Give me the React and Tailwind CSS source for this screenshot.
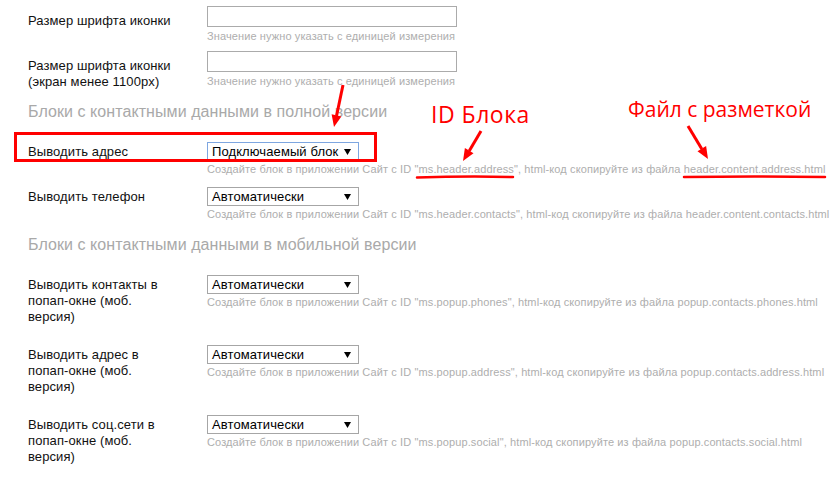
import React from "react";

const Tri = () => (
  <svg width="7" height="6" viewBox="0 0 7 6" className="shrink-0">
    <polygon points="0,0 7,0 3.5,6" fill="#000" />
  </svg>
);

function Select({ value, focused }) {
  return (
    <div
      className={
        "flex h-[19px] w-[152px] items-center justify-between bg-white pl-[4px] pr-[7px] text-[13px] leading-[16px] tracking-[0.1px] text-black border " +
        (focused ? "border-[#7ea6e0]" : "border-[#a6a6a6]")
      }
    >
      <span>{value}</span>
      <Tri />
    </div>
  );
}

function Hint({ children, mt = "mt-[2px]" }) {
  return (
    <div className={mt + " whitespace-nowrap text-[11px] leading-[13px] tracking-[0.11px] text-[#aeaeae]"}>
      {children}
    </div>
  );
}

function Label({ children, pt }) {
  return (
    <div className={"mr-[31px] w-[148px] shrink-0 text-[13px] leading-[16px] tracking-[0.1px] text-[#111] " + pt}>
      {children}
    </div>
  );
}

function InputRow({ label, mb }) {
  return (
    <div className={"flex " + mb}>
      <Label pt="pt-[7px]">{label}</Label>
      <div>
        <div className="h-[21px] w-[250px] border border-[#ababab] bg-white" />
        <Hint mt="mt-[3px]">Значение нужно указать с единицей измерения</Hint>
      </div>
    </div>
  );
}

function SelectRow({ label, value, id, file, focused, mb }) {
  return (
    <div className={"flex " + mb}>
      <Label pt="pt-[2px]">{label}</Label>
      <div>
        <Select value={value} focused={focused} />
        <Hint>
          Создайте блок в приложении Сайт с ID "{id}", html-код скопируйте из файла {file}
        </Hint>
      </div>
    </div>
  );
}

function Heading({ children, cls }) {
  return (
    <div className={"text-[16px] leading-[18px] tracking-[0.07px] text-[#a9a9a9] " + cls}>{children}</div>
  );
}

export default function App() {
  return (
    <div
      className="relative h-[487px] w-[839px] overflow-hidden bg-white"
      style={{ fontFamily: '"Liberation Sans", Arial, sans-serif' }}
    >
      <div className="flex flex-col pl-[28px] pt-[6px]">
        <InputRow label="Размер шрифта иконки" mb="mb-[8px]" />
        <InputRow label="Размер шрифта иконки (экран менее 1100px)" mb="" />
        <Heading cls="mt-[13px] mb-[21px]">Блоки с контактными данными в полной версии</Heading>
        <SelectRow
          label="Выводить адрес"
          value="Подключаемый блок"
          id="ms.header.address"
          file="header.content.address.html"
          focused
          mb="mb-[11px]"
        />
        <SelectRow
          label="Выводить телефон"
          value="Автоматически"
          id="ms.header.contacts"
          file="header.content.contacts.html"
          mb=""
        />
        <Heading cls="mt-[15px] mb-[21px]">Блоки с контактными данными в мобильной версии</Heading>
        <SelectRow
          label="Выводить контакты в попап-окне (моб. версия)"
          value="Автоматически"
          id="ms.popup.phones"
          file="popup.contacts.phones.html"
          mb="mb-[20px]"
        />
        <SelectRow
          label="Выводить адрес в попап-окне (моб. версия)"
          value="Автоматически"
          id="ms.popup.address"
          file="popup.contacts.address.html"
          mb="mb-[20px]"
        />
        <SelectRow
          label="Выводить соц.сети в попап-окне (моб. версия)"
          value="Автоматически"
          id="ms.popup.social"
          file="popup.contacts.social.html"
          mb=""
        />
      </div>

      {/* annotations */}
      <svg
        className="pointer-events-none absolute left-0 top-0"
        width="839"
        height="487"
        viewBox="0 0 839 487"
      >
        <rect x="15.5" y="133.5" width="360" height="27" fill="none" stroke="#ff0000" strokeWidth="3" />
        <line x1="343" y1="85" x2="336.5" y2="116" stroke="#ff0000" strokeWidth="3" />
        <polygon points="334,127 341.4,116.4 331.6,114.3" fill="#ff0000" />
        <line x1="481" y1="131" x2="469.2" y2="151" stroke="#ff0000" strokeWidth="3" />
        <polygon points="463,161 473.5,153.3 464.9,148.1" fill="#ff0000" />
        <line x1="688" y1="126" x2="701.8" y2="149" stroke="#ff0000" strokeWidth="3" />
        <polygon points="708,159 706.1,146.1 697.5,151.3" fill="#ff0000" />
        <path d="M417 177.5 Q465 176 513 177" fill="none" stroke="#ff0000" strokeWidth="2.5" strokeLinecap="round" />
        <path d="M684 177 Q754 176 825 177" fill="none" stroke="#ff0000" strokeWidth="2.5" strokeLinecap="round" />
      </svg>
      <div
        className="pointer-events-none absolute left-[431px] top-[101px] text-[23px] leading-[26px] tracking-[0.5px] text-[#ff0000]"
        style={{ fontFamily: '"Open Sans", sans-serif' }}
      >
        ID Блока
      </div>
      <div
        className="pointer-events-none absolute left-[628px] top-[96px] text-[21px] leading-[26px] text-[#ff0000]"
        style={{ fontFamily: '"Open Sans", sans-serif' }}
      >
        Файл с разметкой
      </div>
    </div>
  );
}
